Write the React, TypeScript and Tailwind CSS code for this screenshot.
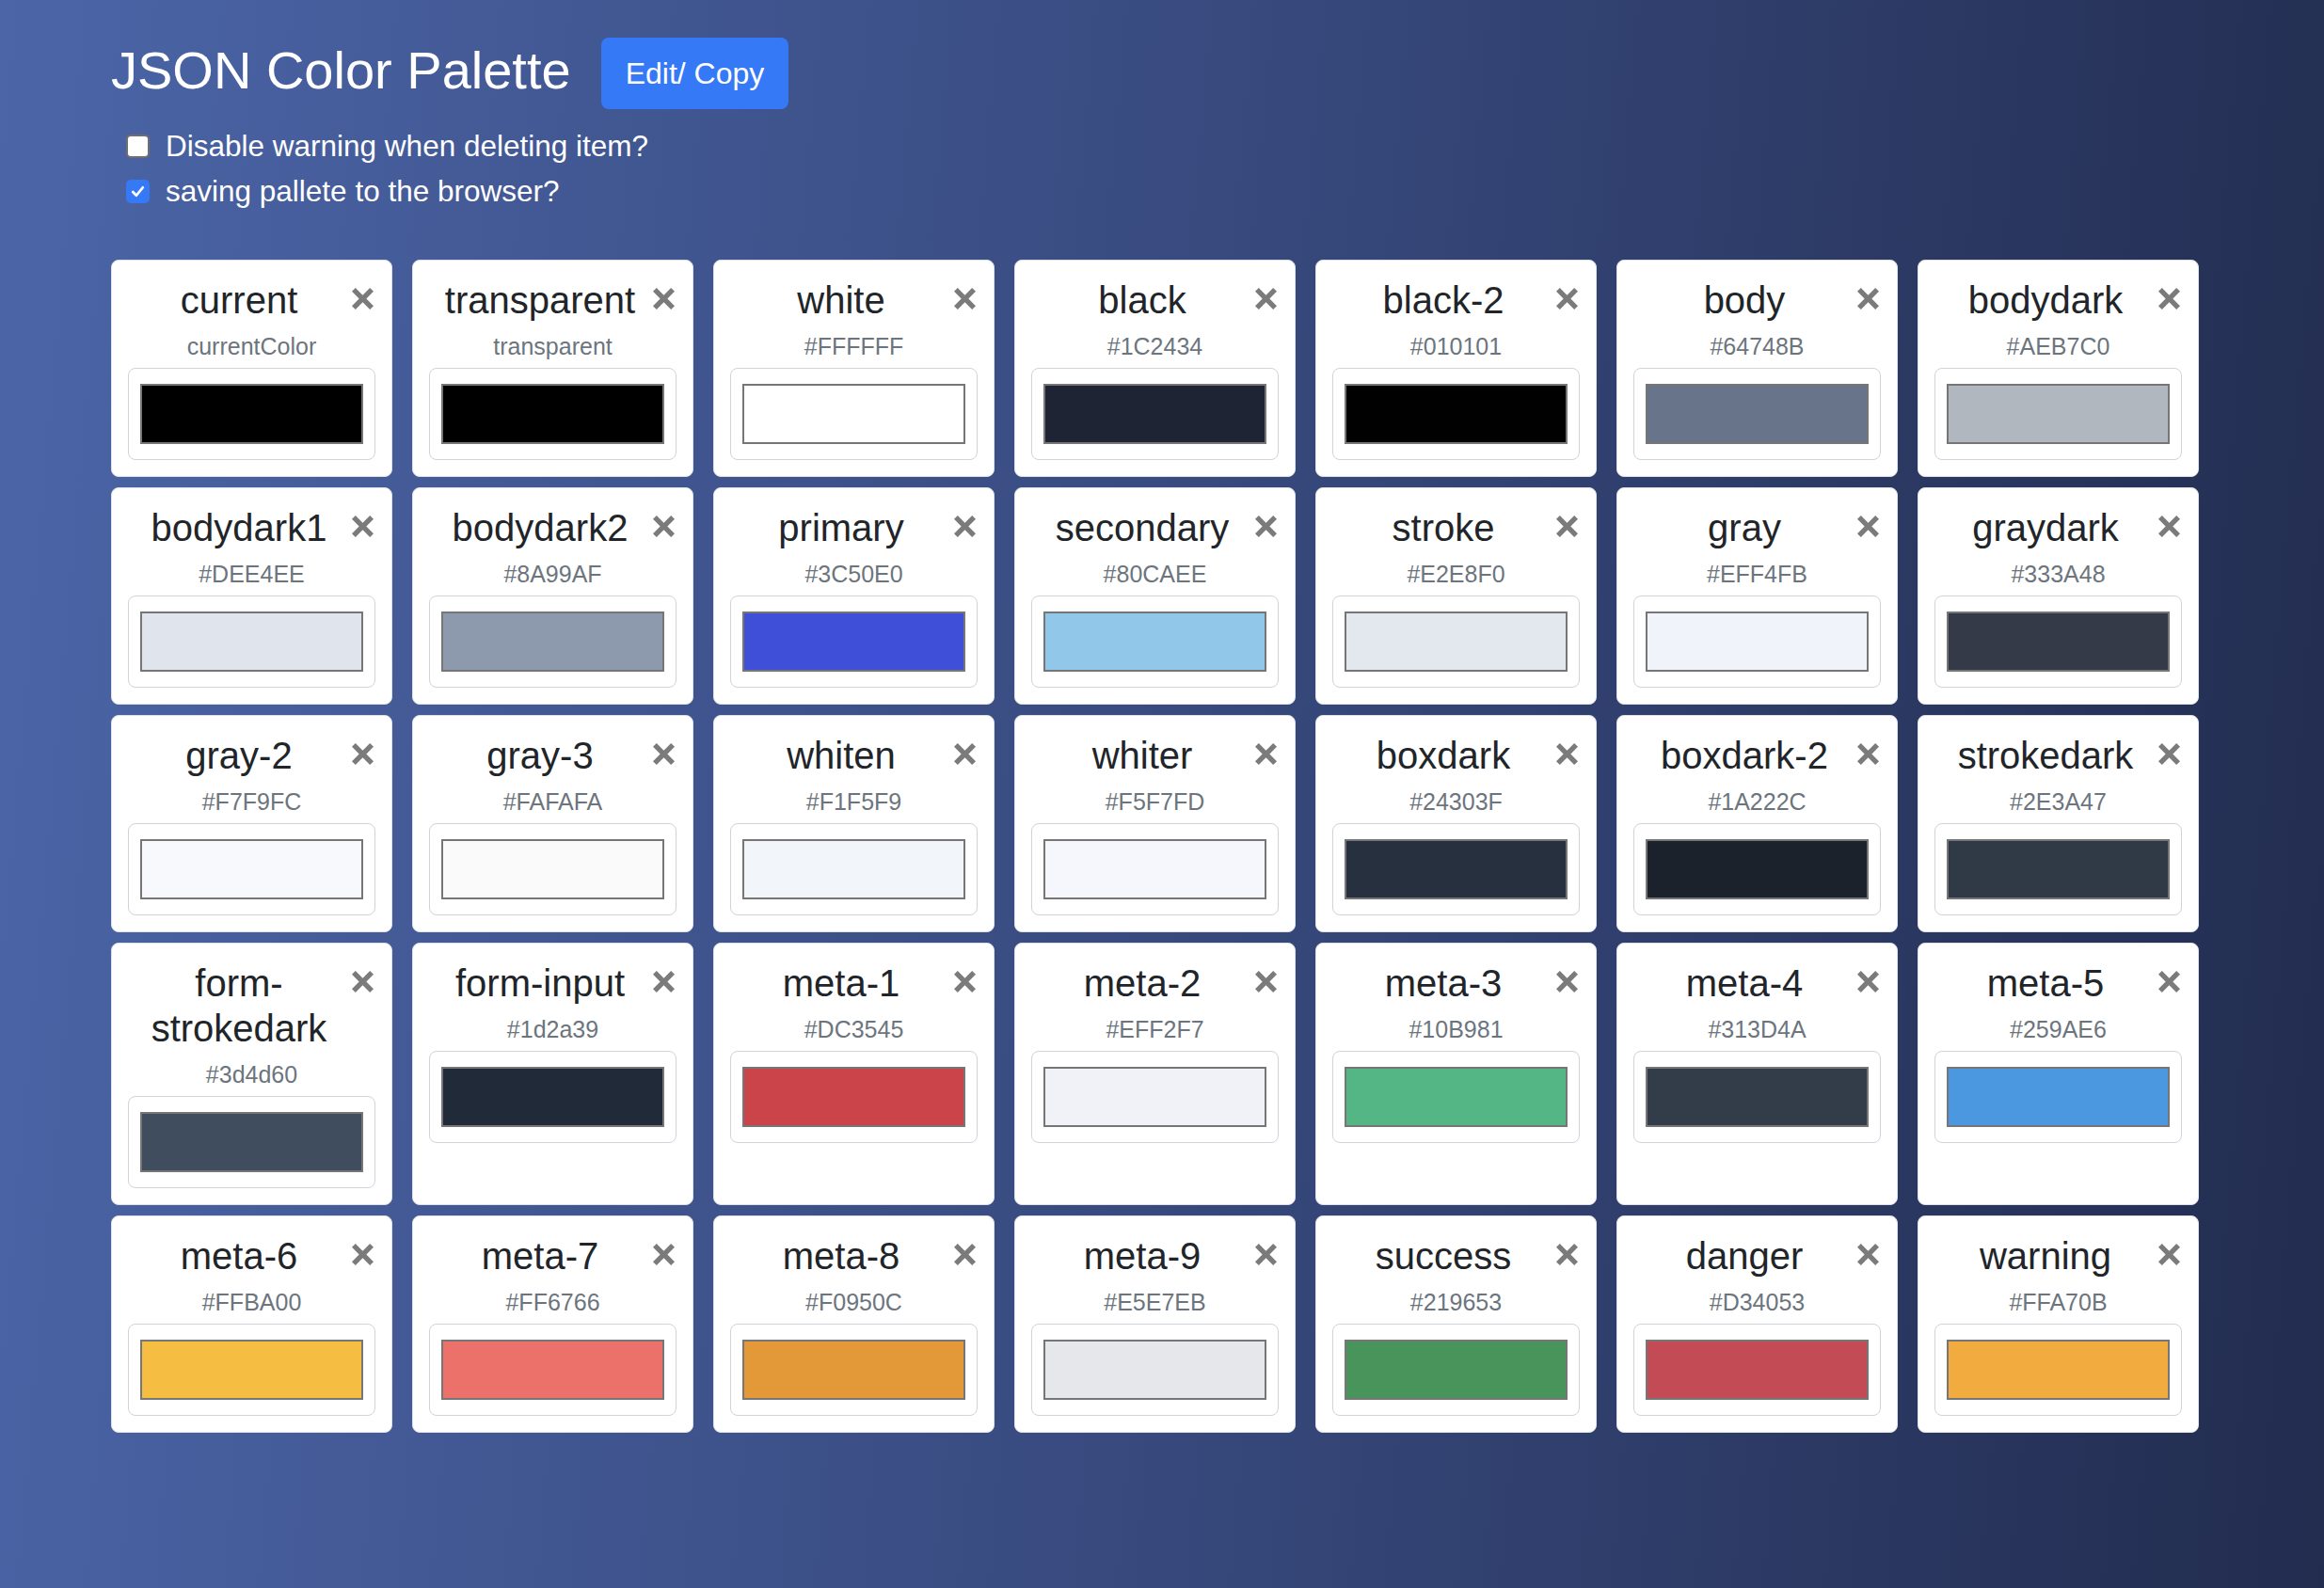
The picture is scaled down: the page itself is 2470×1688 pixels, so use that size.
import { useState } from 'react';

type Swatch = { name: string; value: string };

const palette: Swatch[] = [
  { name: 'current', value: 'currentColor' },
  { name: 'transparent', value: 'transparent' },
  { name: 'white', value: '#FFFFFF' },
  { name: 'black', value: '#1C2434' },
  { name: 'black-2', value: '#010101' },
  { name: 'body', value: '#64748B' },
  { name: 'bodydark', value: '#AEB7C0' },
  { name: 'bodydark1', value: '#DEE4EE' },
  { name: 'bodydark2', value: '#8A99AF' },
  { name: 'primary', value: '#3C50E0' },
  { name: 'secondary', value: '#80CAEE' },
  { name: 'stroke', value: '#E2E8F0' },
  { name: 'gray', value: '#EFF4FB' },
  { name: 'graydark', value: '#333A48' },
  { name: 'gray-2', value: '#F7F9FC' },
  { name: 'gray-3', value: '#FAFAFA' },
  { name: 'whiten', value: '#F1F5F9' },
  { name: 'whiter', value: '#F5F7FD' },
  { name: 'boxdark', value: '#24303F' },
  { name: 'boxdark-2', value: '#1A222C' },
  { name: 'strokedark', value: '#2E3A47' },
  { name: 'form-strokedark', value: '#3d4d60' },
  { name: 'form-input', value: '#1d2a39' },
  { name: 'meta-1', value: '#DC3545' },
  { name: 'meta-2', value: '#EFF2F7' },
  { name: 'meta-3', value: '#10B981' },
  { name: 'meta-4', value: '#313D4A' },
  { name: 'meta-5', value: '#259AE6' },
  { name: 'meta-6', value: '#FFBA00' },
  { name: 'meta-7', value: '#FF6766' },
  { name: 'meta-8', value: '#F0950C' },
  { name: 'meta-9', value: '#E5E7EB' },
  { name: 'success', value: '#219653' },
  { name: 'danger', value: '#D34053' },
  { name: 'warning', value: '#FFA70B' },
];

// the screenshot was taken on a wide-gamut screen, so swatches look a bit flatter
const lin = (v: number) => {
  const c = v / 255;
  return c <= 0.04045 ? c / 12.92 : Math.pow((c + 0.055) / 1.055, 2.4);
};
const enc = (x: number) => {
  const c = x <= 0.0031308 ? x * 12.92 : 1.055 * Math.pow(x, 1 / 2.4) - 0.055;
  return Math.round(Math.min(1, Math.max(0, c)) * 255);
};

function shown(value: string) {
  if (!value.startsWith('#')) return '#000000';
  const r = lin(parseInt(value.slice(1, 3), 16));
  const g = lin(parseInt(value.slice(3, 5), 16));
  const b = lin(parseInt(value.slice(5, 7), 16));
  const R = 0.8225 * r + 0.1774 * g;
  const G = 0.0332 * r + 0.9669 * g;
  const B = 0.0171 * r + 0.0724 * g + 0.9108 * b;
  return `rgb(${enc(R)}, ${enc(G)}, ${enc(B)})`;
}

const CloseIcon = () => (
  <svg width="23" height="23" viewBox="0 0 24 24" fill="#7b7b7b">
    <path d="M4 0 L12 8 L20 0 L24 4 L16 12 L24 20 L20 24 L12 16 L4 24 L0 20 L8 12 L0 4 Z" />
  </svg>
);

const Checkbox = ({ checked, onClick }: { checked: boolean; onClick: () => void }) =>
  checked ? (
    <button onClick={onClick} className="w-[25px] h-[25px] rounded-[5px] bg-[#3579f6] flex items-center justify-center shrink-0">
      <svg width="17" height="17" viewBox="0 0 16 16" fill="none" stroke="white" strokeWidth="2.6" strokeLinecap="round" strokeLinejoin="round">
        <path d="M3 8.5 L6.5 12 L13 4" />
      </svg>
    </button>
  ) : (
    <button onClick={onClick} className="w-[25px] h-[25px] rounded-[5px] bg-white border-2 border-[#6f6f6f] shrink-0" />
  );

const ColorCard = ({ item }: { item: Swatch }) => (
  <div className="bg-white border border-[#dfe1e5] rounded-[8px] px-[17px] pt-[18px] pb-[17px] flex flex-col">
    <div className="flex items-start">
      <h3 className="flex-1 text-center text-[40px] leading-[48px] text-[#212529]">{item.name}</h3>
      <button className="w-[27px] flex justify-end pt-[11px] pr-[2px]">
        <CloseIcon />
      </button>
    </div>
    <p className="mt-[7px] text-center text-[25px] leading-[37px] text-[#6c757d]">{item.value}</p>
    <div className="mt-[4px] rounded-[8px] border-[1.5px] border-[#ced4da] px-[12px] py-[16px]">
      <div className="h-[64px] border-2 border-[#767676]" style={{ backgroundColor: shown(item.value) }} />
    </div>
  </div>
);

export default function App() {
  const [noWarn, setNoWarn] = useState(false);
  const [saving, setSaving] = useState(true);

  return (
    <div className="min-h-screen bg-[linear-gradient(95deg,#4b65a7_0%,#3a4d83_45%,#222c4f_100%)] font-['Liberation_Sans',Arial,sans-serif] px-[118px] pt-[40px] pb-[60px]">
      {/* Header */}
      <div className="flex items-start gap-[32px]">
        <h1 className="text-[56px] leading-[67px] mt-[1px] text-white">JSON Color Palette</h1>
        <button className="h-[76px] px-[26px] rounded-[8px] bg-[#3579f6] text-white text-[32px] leading-[48px]">
          Edit/ Copy
        </button>
      </div>

      {/* Options */}
      <div className="mt-[15px] pl-[16px] text-white text-[31.5px] leading-[48px]">
        <label className="flex items-center gap-[17px]">
          <Checkbox checked={noWarn} onClick={() => setNoWarn(!noWarn)} />
          <span>Disable warning when deleting item?</span>
        </label>
        <label className="flex items-center gap-[17px]">
          <Checkbox checked={saving} onClick={() => setSaving(!saving)} />
          <span>saving pallete to the browser?</span>
        </label>
      </div>

      {/* Palette grid */}
      <div className="mt-[49px] grid grid-cols-[repeat(7,299px)] gap-x-[21px] gap-y-[11px]">
        {palette.map((item) => (
          <ColorCard key={item.name} item={item} />
        ))}
      </div>
    </div>
  );
}
